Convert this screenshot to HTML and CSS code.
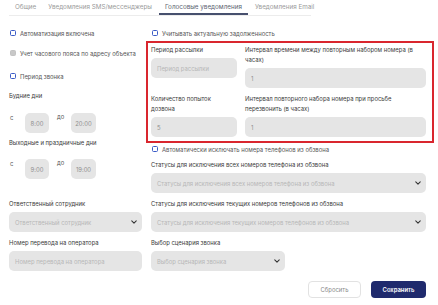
FILE: index.html
```html
<!DOCTYPE html>
<html lang="ru">
<head>
  <meta charset="UTF-8" />
  <meta name="viewport" content="width=device-width, initial-scale=1.0"/>
  <title>Голосовые уведомления</title>
  <link rel="stylesheet" href="styles.css">
</head>
<body>
  <div class="page">

    <div class="tabs">
      <div class="tab">Общие</div>
      <div class="tab">Уведомления SMS/мессенджеры</div>
      <div class="tab active">Голосовые уведомления</div>
      <div class="tab">Уведомления Email</div>
    </div>

    <div class="top">
      <!-- left column -->
      <div class="col-left">
        <label class="check"><span class="box"></span>Автоматизация включена</label>
        <label class="check check-tz"><span class="box disabled"></span>Учет часового пояса по адресу объекта</label>
        <label class="check check-period"><span class="box"></span>Период звонка</label>

        <div class="label days-label">Будние дни</div>
        <div class="time-row">
          <span class="sep">с</span>
          <input class="field time" type="text" value="8:00" />
          <span class="sep sep-to">до</span>
          <input class="field time time-end" type="text" value="20:00" />
        </div>

        <div class="label holidays-label">Выходные и праздничные дни</div>
        <div class="time-row">
          <span class="sep">с</span>
          <input class="field time" type="text" value="9:00" />
          <span class="sep sep-to">до</span>
          <input class="field time time-end" type="text" value="19:00" />
        </div>
      </div>

      <!-- right column -->
      <div class="col-right">
        <label class="check"><span class="box"></span>Учитывать актуальную задолженность</label>

        <div class="highlight">
          <div class="group narrow">
            <div class="label">Период рассылки</div>
            <input class="field" type="text" placeholder="Период рассылки" />
          </div>
          <div class="group">
            <div class="label">Интервал времени между повторным набором номера (в часах)</div>
            <input class="field" type="text" value="1" />
          </div>
          <div class="group narrow">
            <div class="label">Количество попыток дозвона</div>
            <input class="field" type="text" value="5" />
          </div>
          <div class="group">
            <div class="label">Интервал повторного набора номера при просьбе перезвонить (в часах)</div>
            <input class="field" type="text" value="1" />
          </div>
        </div>

        <label class="check check-exclude"><span class="box"></span>Автоматически исключать номера телефонов из обзвона</label>

        <div class="label statuses-label">Статусы для исключения всех номеров телефона из обзвона</div>
        <div class="select">
          <span>Статусы для исключения всех номеров телефона из обзвона</span>
          <svg viewBox="0 0 8 5" width="6" height="4"><path d="M1 1l3 3 3-3" fill="none" stroke="#333" stroke-width="1.4" stroke-linecap="round" stroke-linejoin="round"/></svg>
        </div>
      </div>
    </div>

    <div class="bottom">
      <div class="group">
        <div class="label">Ответственный сотрудник</div>
        <div class="select">
          <span>Ответственный сотрудник</span>
          <svg viewBox="0 0 8 5" width="6" height="4"><path d="M1 1l3 3 3-3" fill="none" stroke="#333" stroke-width="1.4" stroke-linecap="round" stroke-linejoin="round"/></svg>
        </div>
      </div>
      <div class="group">
        <div class="label">Статусы для исключения текущих номеров телефонов из обзвона</div>
        <div class="select">
          <span>Статусы для исключения текущих номеров телефонов из обзвона</span>
          <svg viewBox="0 0 8 5" width="6" height="4"><path d="M1 1l3 3 3-3" fill="none" stroke="#333" stroke-width="1.4" stroke-linecap="round" stroke-linejoin="round"/></svg>
        </div>
      </div>
      <div class="group">
        <div class="label">Номер перевода на оператора</div>
        <input class="field" type="text" placeholder="Номер перевода на оператора" />
      </div>
      <div class="group">
        <div class="label">Выбор сценария звонка</div>
        <div class="select select-short">
          <span>Выбор сценария звонка</span>
          <svg viewBox="0 0 8 5" width="6" height="4"><path d="M1 1l3 3 3-3" fill="none" stroke="#333" stroke-width="1.4" stroke-linecap="round" stroke-linejoin="round"/></svg>
        </div>
      </div>
    </div>

    <div class="actions">
      <button class="btn btn-reset">Сбросить</button>
      <button class="btn btn-save">Сохранить</button>
    </div>

  </div>
</body>
</html>
```

FILE: styles.css
```css
* {
  box-sizing: border-box;
}

body {
  margin: 0;
  background: #fff;
  font-family: Inter, "Noto Sans", sans-serif;
  font-size: 5.9px;
  color: #3a3a3a;
}

.page {
  padding: 0 12px 0 9px;
}

/* tabs */
.tabs {
  display: flex;
  width: 302px;
  height: 16px;
  border-bottom: 1px solid #ececec;
  white-space: nowrap;
}

.tab {
  padding: 0 6px;
  margin-right: 1px;
  line-height: 14px;
  color: #9a9a9a;
  font-size: 6.3px;
  border-bottom: 2px solid transparent;
}

.tab:first-child {
  margin-right: 0;
}

.tab.active {
  color: #5a5f70;
  border-bottom-color: #47506e;
}

/* layout */
.top {
  display: grid;
  grid-template-columns: 133px 1fr;
  column-gap: 9px;
  margin-top: 13px;
  align-items: start;
}

.bottom {
  display: grid;
  grid-template-columns: 133px 1fr;
  column-gap: 9px;
  row-gap: 6px;
  margin-top: 6px;
}

/* checkboxes */
.check {
  display: flex;
  align-items: center;
  height: 8px;
  color: #555;
  white-space: nowrap;
}

.box {
  flex: none;
  width: 6px;
  height: 6px;
  margin: 0 4px 0 1px;
  border: 1px solid #3a5bc7;
  border-radius: 1.5px;
  background: #fff;
}

.box.disabled {
  border-color: #c2c2c2;
  background: #c8c8c8;
}

.check-tz {
  margin-top: 12px;
}

.check-period {
  margin-top: 15px;
}

.check-exclude {
  margin-top: 2px;
}

/* labels and fields */
.label {
  line-height: 10px;
  margin-bottom: 3px;
  color: #3a3a3a;
}

.narrow .label {
  padding-right: 8px;
}

.days-label {
  margin-top: 11px;
  margin-bottom: 12px;
}

.holidays-label {
  margin-top: 5px;
  margin-bottom: 11px;
}

.statuses-label {
  margin-top: 7px;
}

.field {
  display: block;
  width: 100%;
  height: 20px;
  padding: 0 6px;
  border: none;
  border-radius: 5px;
  background: #e5e5e5;
  font-family: inherit;
  font-size: 5.9px;
  color: #8e8e8e;
  outline: none;
}

.field::placeholder {
  color: #b7b7b7;
}

.time-row {
  display: flex;
  align-items: flex-start;
}

.sep {
  width: 16px;
  padding: 1px 0 0 1px;
  line-height: 8px;
  color: #555;
}

.sep-to {
  width: 22px;
  padding: 0 0 0 8px;
}

.time {
  width: 24px;
  padding: 0;
  text-align: center;
}

.time-end {
  width: 25px;
}

.select {
  display: flex;
  align-items: center;
  justify-content: space-between;
  height: 20px;
  padding: 0 5px 0 6px;
  border-radius: 5px;
  background: #e5e5e5;
  color: #b7b7b7;
  white-space: nowrap;
}

.select svg {
  flex: none;
}

.select-short {
  width: 134px;
}

/* highlighted block */
.highlight {
  display: grid;
  grid-template-columns: 86px 1fr;
  column-gap: 8px;
  row-gap: 6px;
  margin: 4px -8px 0 -5px;
  padding: 2px 6px 4px 3px;
  border: 2px solid #d9262e;
}

/* buttons */
.actions {
  display: flex;
  justify-content: flex-end;
  gap: 10px;
  margin-top: 10px;
}

.btn {
  height: 17px;
  border-radius: 4px;
  font-family: inherit;
  font-size: 5.9px;
  cursor: pointer;
}

.btn-reset {
  width: 53px;
  background: #fff;
  border: 1px solid #e2e2e2;
  color: #8a8a8a;
}

.btn-save {
  width: 55px;
  background: #1f2a6d;
  border: none;
  color: #fff;
  font-weight: 600;
}
```
